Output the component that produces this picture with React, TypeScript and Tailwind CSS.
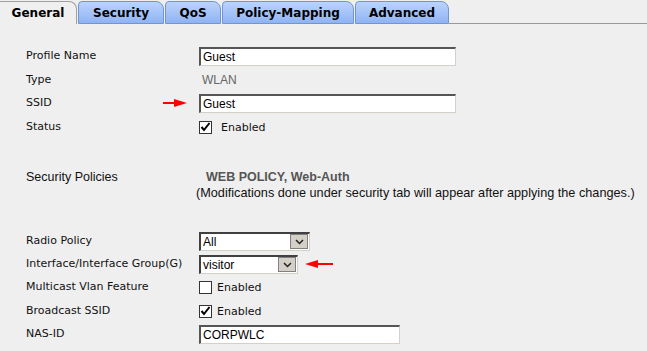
import type { ReactNode } from "react";

const tabs = [
  { label: "Security", w: "w-[86px]" },
  { label: "QoS", w: "w-[56px]" },
  { label: "Policy-Mapping", w: "w-[132px]" },
  { label: "Advanced", w: "w-[94px]" },
];

function TextBox({ value, width }: { value: string; width: string }) {
  return (
    <div
      className={`flex h-[19px] ${width} items-center border-t-2 border-l-2 border-r border-b border-t-[#555] border-l-[#555] border-r-[#d4d0c8] border-b-[#d4d0c8] bg-white pl-[2px] font-['Liberation_Sans',sans-serif] text-[12px] text-black`}
    >
      {value}
    </div>
  );
}

function Select({ value, width }: { value: string; width: string }) {
  return (
    <div
      className={`flex h-[19px] ${width} items-center justify-between border-t-2 border-l-2 border-r border-b border-t-[#404040] border-l-[#404040] border-r-[#d4d0c8] border-b-[#d4d0c8] bg-white pl-[2px] font-['Liberation_Sans',sans-serif] text-[12px] text-black`}
    >
      <span>{value}</span>
      <span className="mr-[1px] flex h-[15px] w-[18px] items-center justify-center border border-[#808080] bg-[#d4d0c8]">
        <svg width="9" height="6" viewBox="0 0 9 6" aria-hidden>
          <polyline points="1,1 4.5,4.5 8,1" fill="none" stroke="#222" strokeWidth="1.5" />
        </svg>
      </span>
    </div>
  );
}

function Check({ checked }: { checked: boolean }) {
  return (
    <span className="inline-flex h-[13px] w-[13px] shrink-0 items-center justify-center border border-[#333] bg-white">
      {checked && (
        <svg width="11" height="11" viewBox="0 0 11 11" aria-hidden>
          <polyline points="1.5,5 4,8 9.5,1" fill="none" stroke="#000" strokeWidth="2" />
        </svg>
      )}
    </span>
  );
}

function Arrow({ dir }: { dir: "left" | "right" }) {
  return dir === "right" ? (
    <svg width="24" height="8" viewBox="0 0 24 8" aria-hidden>
      <rect x="0" y="3" width="13" height="2" fill="#f00" />
      <polygon points="11,0 24,4 11,8" fill="#f00" />
    </svg>
  ) : (
    <svg width="28" height="8" viewBox="0 0 28 8" aria-hidden>
      <rect x="12" y="3" width="16" height="2" fill="#f00" />
      <polygon points="13,0 0,4 13,8" fill="#f00" />
    </svg>
  );
}

function Row({
  label,
  h,
  children,
}: {
  label: string;
  h: string;
  children?: ReactNode;
}) {
  return (
    <div className={`flex ${h} items-center`}>
      <div className="w-[199px] shrink-0 pl-[26px]">{label}</div>
      <div className="flex items-center">{children}</div>
    </div>
  );
}

export default function App() {
  return (
    <div className="h-[351px] w-[647px] overflow-hidden bg-[#efefef] font-['DejaVu_Sans',Verdana,sans-serif] text-[11px] text-[#111]">
      {/* tab strip */}
      <div className="flex h-[24px] items-end">
        <div className="flex h-[23px] w-[77px] items-center justify-center rounded-tr-[8px] border-t border-r border-[#a0a0a0] bg-[#efefef] text-[12px] font-bold text-black">
          General
        </div>
        {tabs.map((t) => (
          <div
            key={t.label}
            className={`ml-[1px] flex h-[23px] ${t.w} items-center justify-center rounded-tl-[4px] rounded-tr-[8px] border border-[#6f95d3] bg-gradient-to-b from-[#bcd3fb] to-[#8fb4f4] text-[12px] font-bold text-black`}
          >
            {t.label}
          </div>
        ))}
        <div className="h-[1px] flex-1 bg-[#999]" />
      </div>

      <div className="pt-[20px]">
        <Row label="Profile Name" h="h-[24px]">
          <TextBox value="Guest" width="w-[257px]" />
        </Row>
        <Row label="Type" h="h-[24px]">
          <span className="pl-[3px] font-['Liberation_Sans',sans-serif] text-[12px] text-[#666]">WLAN</span>
        </Row>
        <div className="flex h-[22px] items-center">
          <div className="flex w-[199px] shrink-0 items-center justify-between pl-[26px] pr-[12px]">
            <span>SSID</span>
            <Arrow dir="right" />
          </div>
          <TextBox value="Guest" width="w-[257px]" />
        </div>
        <Row label="Status" h="h-[26px]">
          <Check checked />
          <span className="ml-[9px] mt-[2px]">Enabled</span>
        </Row>

        <div className="h-[28px]" />

        <div className="flex h-[18px] items-center font-['Liberation_Sans',sans-serif] text-[12.5px]">
          <div className="w-[206px] shrink-0 pl-[26px]">Security Policies</div>
          <span className="font-bold text-[#555]">WEB POLICY, Web-Auth</span>
        </div>
        <div className="flex h-[16px] items-center pl-[196px] font-['Liberation_Sans',sans-serif] text-[12.7px]">
          (Modifications done under security tab will appear after applying the changes.)
        </div>

        <div className="h-[28px]" />

        <Row label="Radio Policy" h="h-[22px]">
          <Select value="All" width="w-[111px]" />
        </Row>
        <Row label="Interface/Interface Group(G)" h="h-[24px]">
          <Select value="visitor" width="w-[99px]" />
          <span className="ml-[7px] flex">
            <Arrow dir="left" />
          </span>
        </Row>
        <Row label="Multicast Vlan Feature" h="h-[23px]">
          <Check checked={false} />
          <span className="ml-[5px] mt-[2px]">Enabled</span>
        </Row>
        <Row label="Broadcast SSID" h="h-[24px]">
          <Check checked />
          <span className="ml-[5px] mt-[2px]">Enabled</span>
        </Row>
        <Row label="NAS-ID" h="h-[23px]">
          <TextBox value="CORPWLC" width="w-[201px]" />
        </Row>
      </div>
    </div>
  );
}
